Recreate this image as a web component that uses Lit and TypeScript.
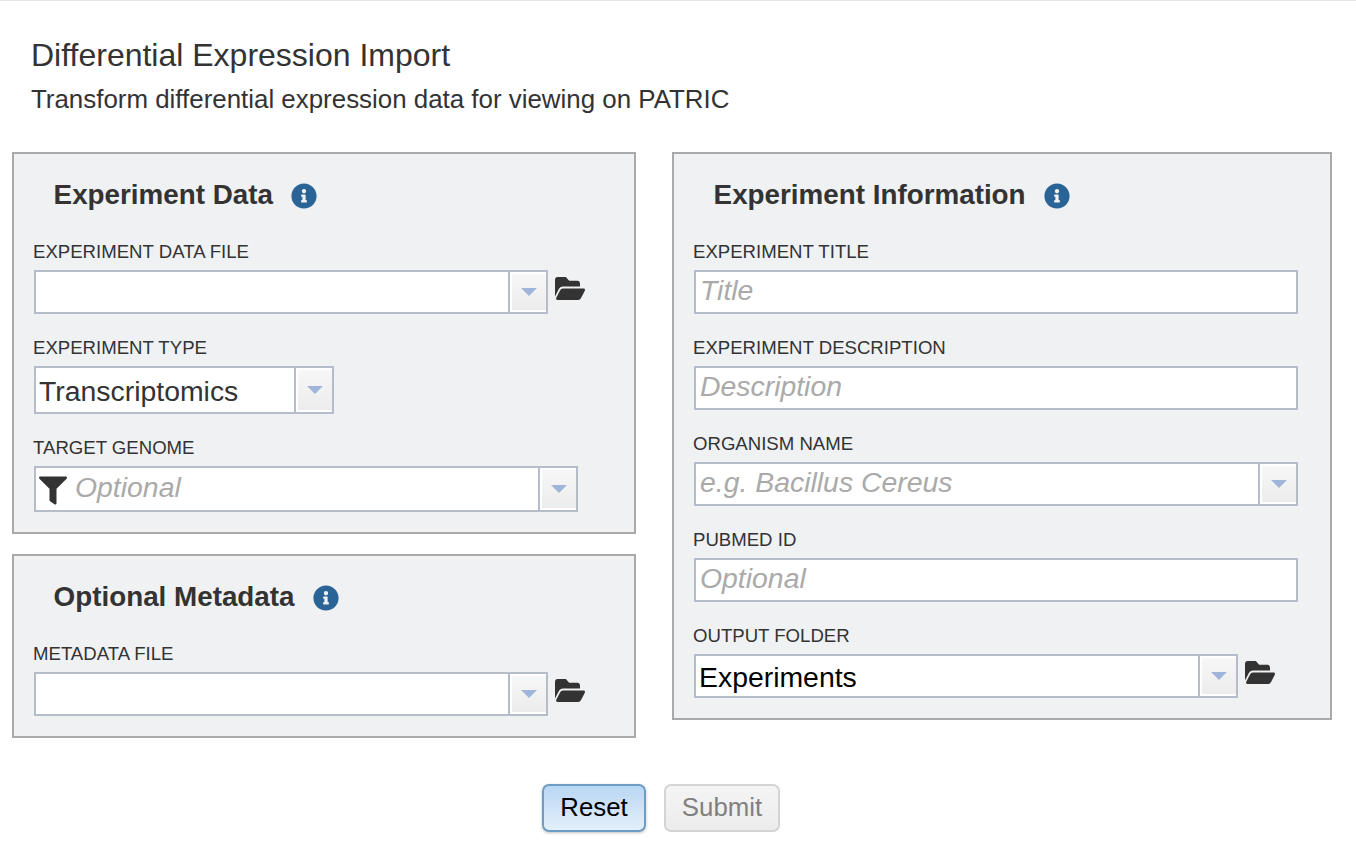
import { LitElement, html, css, svg } from "lit";
import { customElement } from "lit/decorators.js";

const infoPath =
  "M256 8C119.043 8 8 119.083 8 256c0 136.997 111.043 248 248 248s248-111.003 248-248C504 119.083 392.957 8 256 8zm0 110c23.196 0 42 18.804 42 42s-18.804 42-42 42-42-18.804-42-42 18.804-42 42-42zm56 254c0 6.627-5.373 12-12 12h-88c-6.627 0-12-5.373-12-12v-24c0-6.627 5.373-12 12-12h12v-64h-12c-6.627 0-12-5.373-12-12v-24c0-6.627 5.373-12 12-12h64c6.627 0 12 5.373 12 12v100h12c6.627 0 12 5.373 12 12v24z";
const folderPath =
  "M572.694 292.093L500.27 416.248A63.997 63.997 0 0 1 444.989 448H45.025c-18.523 0-30.064-20.093-20.731-36.093l72.424-124.155A64 64 0 0 1 152 256h399.964c18.523 0 30.064 20.093 20.73 36.093zM152 224h328v-48c0-26.51-21.49-48-48-48H272l-64-64H48C21.49 64 0 85.49 0 112v278.046l69.077-118.418C86.214 242.25 117.989 224 152 224z";
const filterPath =
  "M487.976 0H24.028C2.71 0-8.047 25.866 7.058 40.971L192 225.941V432c0 7.831 3.821 15.17 10.237 19.662l80 55.98C298.02 518.69 320 507.493 320 487.98V225.941l184.947-184.97C520.021 25.896 509.338 0 487.976 0z";

const infoIcon = html`<svg class="info" viewBox="0 0 512 512">${svg`<path d=${infoPath}></path>`}</svg>`;
const folderIcon = html`<svg class="folder" viewBox="0 64 576 384" preserveAspectRatio="none">${svg`<path d=${folderPath}></path>`}</svg>`;
const filterIcon = html`<svg class="filter" viewBox="0 0 512 512">${svg`<path d=${filterPath}></path>`}</svg>`;

@customElement("app-root")
export class AppRoot extends LitElement {
  static styles = css`
    :host {
      display: block;
      font-family: "Liberation Sans", Arial, sans-serif;
      color: #333;
      background: #fff;
    }
    .page {
      height: 846px;
      box-sizing: border-box;
      border-top: 1px solid #e6e6e6;
      padding-top: 37px;
    }
    .head {
      padding-left: 31px;
    }
    h1 {
      margin: 0;
      font-size: 32px;
      font-weight: 400;
      line-height: 34px;
    }
    .sub {
      margin-top: 13px;
      font-size: 25.9px;
      line-height: 28px;
    }
    .columns {
      display: flex;
      align-items: flex-start;
      gap: 36px;
      margin-top: 39px;
      padding-left: 12px;
    }
    .left {
      width: 624px;
      display: flex;
      flex-direction: column;
      gap: 20px;
    }
    .right {
      width: 660px;
    }
    .panel {
      box-sizing: border-box;
      border: 2px solid #aaa;
      background: #f0f1f3;
      padding: 21px 20px 20px;
    }
    h2 {
      display: flex;
      align-items: center;
      gap: 18px;
      margin: 0 0 25px 19.6px;
      height: 40px;
      font-size: 27.8px;
      font-weight: 700;
    }
    .info {
      width: 26px;
      height: 26px;
      fill: #2a6496;
      flex: none;
      margin-top: 2px;
    }
    .field + .field {
      margin-top: 22px;
    }
    .label {
      margin-left: -1px;
      height: 22px;
      line-height: 22px;
      margin-bottom: 8px;
      font-size: 18.6px;
      white-space: nowrap;
      padding-top: 1px;
      box-sizing: border-box;
    }
    .row {
      display: flex;
      align-items: flex-start;
    }
    .folder {
      width: 30px;
      height: 23px;
      fill: #333;
      margin: 7px 0 0 7px;
      flex: none;
    }
    .box {
      box-sizing: border-box;
      height: 44px;
      display: flex;
      align-items: center;
      border: 2px solid #b5bcca;
      background: #fff;
      font-size: 28.4px;
      overflow: hidden;
    }
    .h48 {
      height: 48px;
    }
    .h46 {
      height: 46px;
    }
    .text {
      flex: 1;
      min-width: 0;
      padding-left: 3px;
      white-space: nowrap;
      padding-top: 2px;
    }
    .hint {
      color: #aaa;
      font-style: italic;
      padding-left: 4px;
      padding-top: 0;
      padding-bottom: 4px;
    }
    .hint.after-filter {
      padding-left: 0;
    }
    .black {
      color: #000;
    }
    .filter {
      width: 28px;
      height: 29px;
      fill: #333;
      margin: 2px 8px 0 3px;
      flex: none;
    }
    .arrow {
      align-self: stretch;
      box-sizing: border-box;
      width: 38px;
      border-left: 2px solid #b5bcca;
      padding: 2px 0 2px 2px;
      flex: none;
      display: flex;
    }
    .arrow span {
      flex: 1;
      display: flex;
      align-items: center;
      justify-content: center;
      background: linear-gradient(#f7f7f7, #ececec);
    }
    .arrow i {
      width: 0;
      height: 0;
      border-left: 8px solid transparent;
      border-right: 8px solid transparent;
      border-top: 8px solid #9fb6da;
    }
    .actions {
      display: flex;
      justify-content: flex-start;
      gap: 18px;
      margin-top: 46px;
      padding-left: 542px;
    }
    button {
      box-sizing: border-box;
      height: 48px;
      border-radius: 7px;
      font: 400 25.8px "Liberation Sans", Arial, sans-serif;
      padding: 0 0 2px;
    }
    .reset {
      width: 104px;
      color: #000;
      border: 2px solid #6f9cc3;
      background: linear-gradient(#b9d6f3, #e4f0fb);
      box-shadow: 0 1px 3px rgba(0, 0, 0, 0.25);
    }
    .submit {
      width: 116px;
      color: #808080;
      border: 2px solid #d4d4d4;
      background: linear-gradient(#f4f4f4, #ececec);
    }
  `;

  // one labelled control; width is the only value that differs per field
  field(label: string, width: number, inner: unknown, folder = false, cls = "") {
    return html`
      <div class="field">
        <div class="label">${label}</div>
        <div class="row">
          <div class="box ${cls}" style="width:${width}px">${inner}</div>
          ${folder ? folderIcon : ""}
        </div>
      </div>
    `;
  }

  arrow() {
    return html`<div class="arrow"><span><i></i></span></div>`;
  }

  render() {
    const drop = this.arrow();
    return html`
      <div class="page">
        <div class="head">
          <h1>Differential Expression Import</h1>
          <div class="sub">Transform differential expression data for viewing on PATRIC</div>
        </div>
        <div class="columns">
          <div class="left">
            <section class="panel">
              <h2>Experiment Data ${infoIcon}</h2>
              ${this.field("EXPERIMENT DATA FILE", 514, html`<div class="text"></div>${drop}`, true)}
              ${this.field("EXPERIMENT TYPE", 300, html`<div class="text">Transcriptomics</div>${drop}`, false, "h48")}
              ${this.field(
                "TARGET GENOME",
                544,
                html`${filterIcon}<div class="text hint after-filter">Optional</div>${drop}`,
                false,
                "h46"
              )}
            </section>
            <section class="panel">
              <h2>Optional Metadata ${infoIcon}</h2>
              ${this.field("METADATA FILE", 514, html`<div class="text"></div>${drop}`, true)}
            </section>
          </div>
          <div class="right">
            <section class="panel">
              <h2>Experiment Information ${infoIcon}</h2>
              ${this.field("EXPERIMENT TITLE", 604, html`<div class="text hint">Title</div>`)}
              ${this.field("EXPERIMENT DESCRIPTION", 604, html`<div class="text hint">Description</div>`)}
              ${this.field("ORGANISM NAME", 604, html`<div class="text hint">e.g. Bacillus Cereus</div>${drop}`)}
              ${this.field("PUBMED ID", 604, html`<div class="text hint">Optional</div>`)}
              ${this.field("OUTPUT FOLDER", 544, html`<div class="text black">Experiments</div>${drop}`, true)}
            </section>
          </div>
        </div>
        <div class="actions">
          <button class="reset">Reset</button>
          <button class="submit" disabled>Submit</button>
        </div>
      </div>
    `;
  }
}
